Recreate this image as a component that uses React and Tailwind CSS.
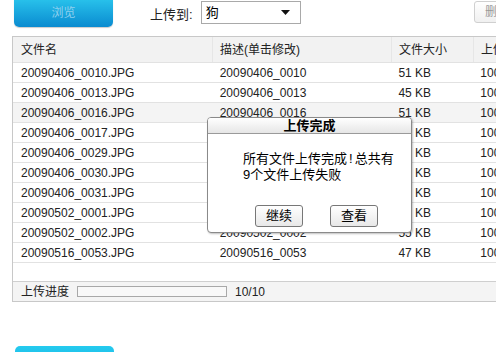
import React from 'react';

const rows = [
    { name: '20090406_0010.JPG', desc: '20090406_0010', size: '51 KB' },
    { name: '20090406_0013.JPG', desc: '20090406_0013', size: '45 KB' },
    { name: '20090406_0016.JPG', desc: '20090406_0016', size: '51 KB', hover: true },
    { name: '20090406_0017.JPG', desc: '20090406_0017', size: '51 KB' },
    { name: '20090406_0029.JPG', desc: '20090406_0029', size: '51 KB' },
    { name: '20090406_0030.JPG', desc: '20090406_0030', size: '51 KB' },
    { name: '20090406_0031.JPG', desc: '20090406_0031', size: '51 KB' },
    { name: '20090502_0001.JPG', desc: '20090502_0001', size: '51 KB' },
    { name: '20090502_0002.JPG', desc: '20090502_0002', size: '55 KB' },
    { name: '20090516_0053.JPG', desc: '20090516_0053', size: '47 KB' },
];

const font = { fontFamily: '"Liberation Sans", "Noto Sans CJK SC", sans-serif' };

const UploadDialog = () => (
    <div className="absolute left-[207px] top-[117px] w-[205px] h-[116px] border border-[#8a8a8a] rounded-[4px] bg-white shadow-[1px_1px_2px_rgba(0,0,0,0.25)] flex flex-col overflow-hidden">
        <div className="h-[16px] bg-gradient-to-b from-white to-[#e6e6e6] border-b border-[#9a9a9a] flex items-center justify-center">
            <span className="text-[13px] font-bold text-black leading-none">上传完成</span>
        </div>
        <div className="flex-1 pl-[35px] pt-[17px] text-[13px] leading-[16px] text-black">
            <p>所有文件上传完成<span className="mx-[2px]">!</span>总共有</p>
            <p>9个文件上传失败</p>
        </div>
        <div className="flex pl-[47px] gap-[27px] pb-[5px]">
            <button className="w-[48px] h-[22px] border border-[#777] rounded-[3px] bg-gradient-to-b from-white to-[#e8e8e8] text-[13px] text-black">继续</button>
            <button className="w-[48px] h-[22px] border border-[#777] rounded-[3px] bg-gradient-to-b from-white to-[#e8e8e8] text-[13px] text-black">查看</button>
        </div>
    </div>
);

const App = () => {
    return (
        <div className="relative w-[496px] h-[352px] overflow-hidden bg-white text-[12px] text-[#222]" style={font}>
            {/* top toolbar */}
            <div className="flex items-start h-[36px]">
                <div className="ml-[14px] -mt-[4px] w-[99px] h-[31px] rounded-b-[5px] rounded-t-[5px] bg-gradient-to-b from-[#2cc8ee] to-[#0a8bd0] flex items-center justify-center pt-[2px] shadow-[0_1px_1px_rgba(0,0,0,0.2)]">
                    <span className="text-[12px] text-[#8fd0ee]">浏览</span>
                </div>
                <span className="ml-[37px] mt-[5px] text-[13px] text-[#222]">上传到:</span>
                <div className="ml-[8px] mt-[1px] w-[100px] h-[23px] border border-[#a9a9a9] flex items-center justify-between px-[4px]">
                    <span className="text-[13px] text-black">狗</span>
                    <svg width="9" height="5" viewBox="0 0 9 5" className="mr-[6px]"><path d="M0 0h9L4.5 5z" fill="#111" /></svg>
                </div>
                <div className="ml-auto mt-[1px] -mr-[6px] w-[28px] h-[22px] border border-[#d0d0d0] rounded-[3px] bg-gradient-to-b from-white to-[#f0f0f0] flex items-center pl-[10px]">
                    <span className="text-[12px] text-[#999]">删</span>
                </div>
            </div>

            {/* file table panel */}
            <div className="ml-[12px] w-[500px] h-[266px] border border-[#c8c8c8] flex flex-col">
                <div className="flex-1">
                    <div className="flex h-[26px] items-center bg-[#f2f2f2] border-b border-[#e2e2e2] text-[12px] text-[#222]">
                        <div className="w-[200px] pl-[8px] h-full flex items-center border-r border-[#e6e6e6]">文件名</div>
                        <div className="w-[179px] pl-[7px] h-full flex items-center border-r border-[#e6e6e6]">描述(单击修改)</div>
                        <div className="w-[82px] pl-[7px] h-full flex items-center border-r border-[#e6e6e6]">文件大小</div>
                        <div className="pl-[7px] h-full flex items-center">上传</div>
                    </div>
                    {rows.map((row) => (
                        <div key={row.name} className={`flex h-[20px] items-center border-b border-[#e2e2e2] ${row.hover ? 'bg-[#f4f4f4]' : 'bg-white'}`}>
                            <div className="w-[200px] pl-[8px]">{row.name}</div>
                            <div className="w-[179px] pl-[7px]">{row.desc}</div>
                            <div className="w-[82px] pl-[7px]">{row.size}</div>
                            <div className="pl-[7px]">100%</div>
                        </div>
                    ))}
                </div>
                <div className="h-[20px] border-t border-[#cfcfcf] bg-[#f4f4f4] flex items-center">
                    <span className="pl-[8px] text-[12px] text-[#222]">上传进度</span>
                    <div className="ml-[8px] w-[150px] h-[11px] border border-[#a8a8a8] bg-[#f8f8f8]"></div>
                    <span className="ml-[8px] text-[12px] text-[#222]">10/10</span>
                </div>
            </div>

            {/* bottom button */}
            <div className="ml-[15px] mt-[44px] w-[99px] h-[20px] rounded-t-[5px] bg-gradient-to-b from-[#25cbef] to-[#16b4e4]"></div>

            <UploadDialog />
        </div>
    );
};

export default App;
